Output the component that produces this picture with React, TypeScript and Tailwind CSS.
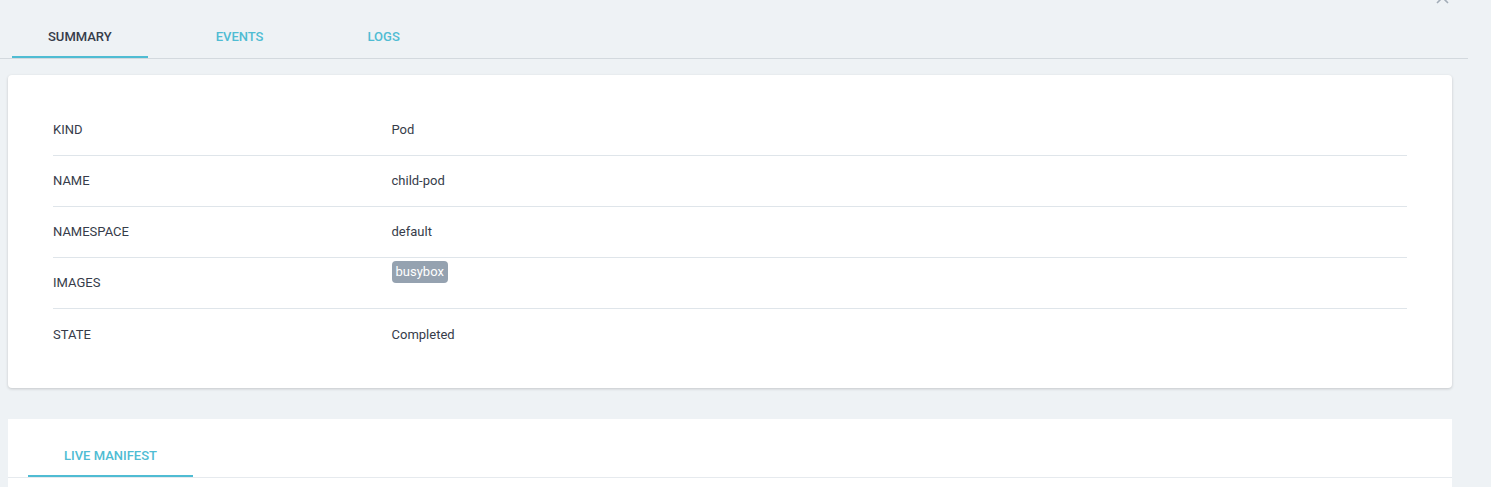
import React from 'react'

const rows = [
    { label: 'KIND', value: 'Pod' },
    { label: 'NAME', value: 'child-pod' },
    { label: 'NAMESPACE', value: 'default' },
    { label: 'IMAGES', badge: 'busybox' },
    { label: 'STATE', value: 'Completed' },
]

function Tab({ label, active, selected }: { label: string; active?: boolean; selected?: boolean }) {
    return (
        <div
            className={`flex h-[44px] items-center px-[36px] pt-[4px] text-[13px] font-medium uppercase border-b-2 ${
                active ? 'border-[#4fbcd3]' : 'border-transparent'
            } ${selected ? 'text-[#363c4a]' : 'text-[#4fbcd3]'}`}
        >
            {label}
        </div>
    )
}

export default function App() {
    return (
        <div className="relative min-h-[487px] w-full bg-[#eef2f5] font-['Roboto','Liberation_Sans',sans-serif] overflow-hidden">
            {/* close button, mostly scrolled out of view */}
            <svg
                className="absolute left-[1436px] top-[-9px]"
                width="13"
                height="13"
                viewBox="0 0 13 13"
                fill="none"
                stroke="#a3adb8"
                strokeWidth="1.6"
            >
                <path d="M1 1l11 11M12 1L1 12" />
            </svg>

            <div className="w-[1468px]">
                <div className="flex gap-8 border-b border-[#d3d9de] pl-[12px] pt-[14px]">
                    <Tab label="Summary" active selected />
                    <Tab label="Events" />
                    <Tab label="Logs" />
                </div>

                <div className="ml-2 mr-4 mt-4 rounded bg-white px-[45px] pt-[30px] pb-[28px] shadow-[0_1px_3px_rgba(0,0,0,0.18)]">
                    {rows.map((row, i) => (
                        <div
                            key={row.label}
                            className={`flex h-[51px] text-[13px] text-[#363c4a] ${
                                i < rows.length - 1 ? 'border-b border-[#dfe5ea]' : ''
                            }`}
                        >
                            <div className="flex w-1/4 items-center">{row.label}</div>
                            {row.badge ? (
                                <div className="pt-[3px]">
                                    <span className="inline-flex h-[22px] items-center rounded bg-[#95a2b0] px-[4px] text-white">
                                        {row.badge}
                                    </span>
                                </div>
                            ) : (
                                <div className="flex items-center">{row.value}</div>
                            )}
                        </div>
                    ))}
                </div>

                <div className="ml-2 mr-4 mt-[31px] h-[80px] bg-white pt-[14px]">
                    <div className="flex border-b border-[#e6eaee] pl-[20px]">
                        <Tab label="Live Manifest" active />
                    </div>
                </div>
            </div>
        </div>
    )
}
